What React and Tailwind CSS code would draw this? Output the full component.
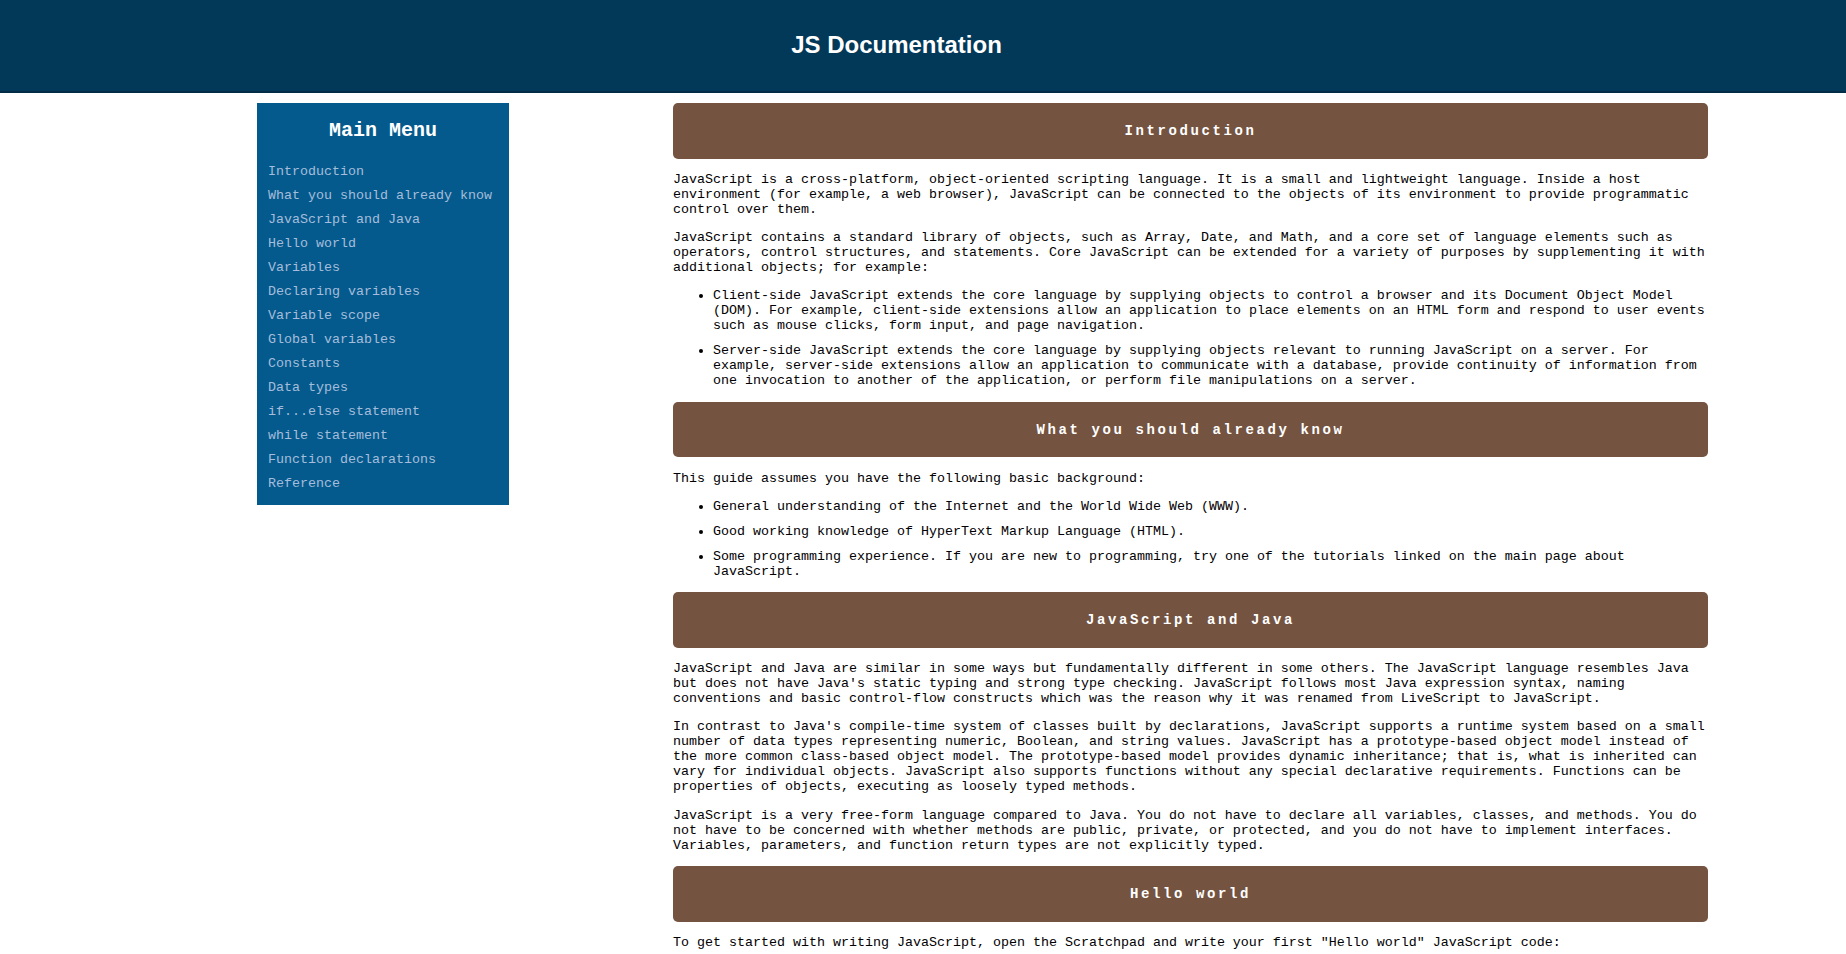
import React from "react";

const menu = [
  "Introduction",
  "What you should already know",
  "JavaScript and Java",
  "Hello world",
  "Variables",
  "Declaring variables",
  "Variable scope",
  "Global variables",
  "Constants",
  "Data types",
  "if...else statement",
  "while statement",
  "Function declarations",
  "Reference",
];

function SectionHeader({ children }) {
  return (
    <header className="h-[55.5px] rounded-[5px] bg-[#745340] flex items-center justify-center">
      <span className="text-white font-bold text-[14px] tracking-[2.6px] leading-[18px]">{children}</span>
    </header>
  );
}

function P({ children }) {
  return <p className="my-[13.33px]">{children}</p>;
}

function UL({ items }) {
  return (
    <ul className="my-[13.33px] list-disc pl-10">
      {items.map((t, i) => (
        <li key={i} className="mb-[10px]">
          {t}
        </li>
      ))}
    </ul>
  );
}

export default function App() {
  return (
    <div className="min-h-screen bg-white">
      <div className="h-[93px] bg-[#023858] border-b-2 border-[#022c47] flex items-center justify-center pr-[53px] pb-[2px]">
        <h1 className="text-white font-bold text-[24px] font-['Liberation_Sans',Arial,sans-serif]">
          JS Documentation
        </h1>
      </div>

      <div className="flex items-start mt-[10px] ml-[257px] gap-[164px] font-['Liberation_Mono','Courier_New',monospace] text-[13.33px] leading-[15px]">
        <nav className="w-[252px] shrink-0 bg-[#045a8d] pt-[16px] pb-[14px] px-[11px]">
          <header className="text-center text-white font-bold text-[20px] leading-[23px]">Main Menu</header>
          <ul className="mt-[22px] flex flex-col gap-[9px]">
            {menu.map((m) => (
              <li key={m}>
                <a href="#" className="text-[#a6bddb] no-underline">
                  {m}
                </a>
              </li>
            ))}
          </ul>
        </nav>

        <main className="w-[1035px] shrink-0 text-black">
          <section>
            <SectionHeader>Introduction</SectionHeader>
            <P>
              JavaScript is a cross-platform, object-oriented scripting language. It is a small and lightweight language. Inside a host environment (for example, a web browser), JavaScript can be connected to the objects of its environment to provide programmatic control over them.
            </P>
            <P>
              JavaScript contains a standard library of objects, such as Array, Date, and Math, and a core set of language elements such as operators, control structures, and statements. Core JavaScript can be extended for a variety of purposes by supplementing it with additional objects; for example:
            </P>
            <UL
              items={[
                "Client-side JavaScript extends the core language by supplying objects to control a browser and its Document Object Model (DOM). For example, client-side extensions allow an application to place elements on an HTML form and respond to user events such as mouse clicks, form input, and page navigation.",
                "Server-side JavaScript extends the core language by supplying objects relevant to running JavaScript on a server. For example, server-side extensions allow an application to communicate with a database, provide continuity of information from one invocation to another of the application, or perform file manipulations on a server.",
              ]}
            />
          </section>

          <section>
            <SectionHeader>What you should already know</SectionHeader>
            <P>This guide assumes you have the following basic background:</P>
            <UL
              items={[
                "General understanding of the Internet and the World Wide Web (WWW).",
                "Good working knowledge of HyperText Markup Language (HTML).",
                "Some programming experience. If you are new to programming, try one of the tutorials linked on the main page about JavaScript.",
              ]}
            />
          </section>

          <section>
            <SectionHeader>JavaScript and Java</SectionHeader>
            <P>
              JavaScript and Java are similar in some ways but fundamentally different in some others. The JavaScript language resembles Java but does not have Java's static typing and strong type checking. JavaScript follows most Java expression syntax, naming conventions and basic control-flow constructs which was the reason why it was renamed from LiveScript to JavaScript.
            </P>
            <P>
              In contrast to Java's compile-time system of classes built by declarations, JavaScript supports a runtime system based on a small number of data types representing numeric, Boolean, and string values. JavaScript has a prototype-based object model instead of the more common class-based object model. The prototype-based model provides dynamic inheritance; that is, what is inherited can vary for individual objects. JavaScript also supports functions without any special declarative requirements. Functions can be properties of objects, executing as loosely typed methods.
            </P>
            <P>
              JavaScript is a very free-form language compared to Java. You do not have to declare all variables, classes, and methods. You do not have to be concerned with whether methods are public, private, or protected, and you do not have to implement interfaces. Variables, parameters, and function return types are not explicitly typed.
            </P>
          </section>

          <section>
            <SectionHeader>Hello world</SectionHeader>
            <P>
              To get started with writing JavaScript, open the Scratchpad and write your first "Hello world" JavaScript code:
            </P>
            <pre className="my-[13.33px] bg-[#f2f2f2] p-3 text-[13.33px]">{`function greetMe(yourName) { alert("Hello " + yourName); }

greetMe("World");`}</pre>
          </section>
        </main>
      </div>
    </div>
  );
}
